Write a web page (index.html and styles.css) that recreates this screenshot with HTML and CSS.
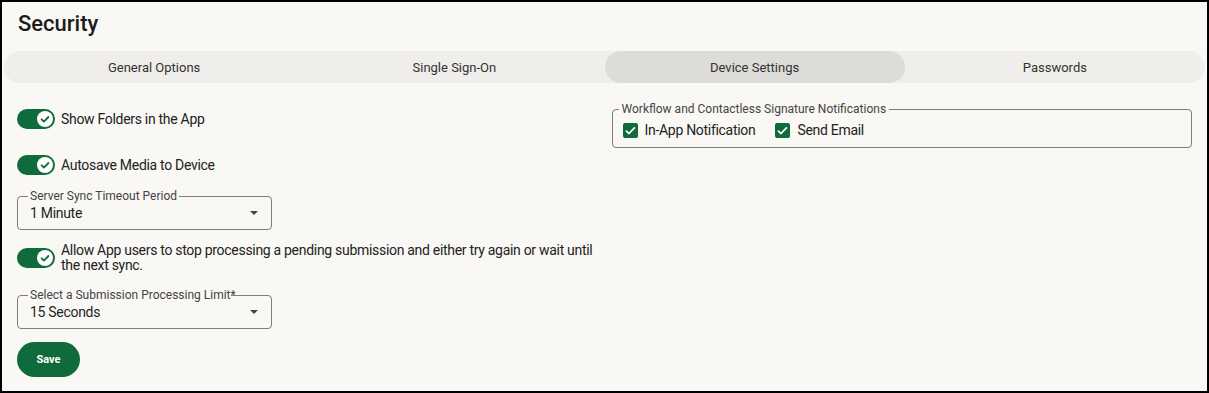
FILE: index.html
```html
<!DOCTYPE html>
<html lang="en">
<head>
<meta charset="utf-8">
<title>Security</title>
<link rel="stylesheet" href="styles.css">
</head>
<body>
<div class="page">
  <h1 class="title">Security</h1>
  <div class="tabs">
    <div class="tab">General Options</div>
    <div class="tab">Single Sign-On</div>
    <div class="tab active">Device Settings</div>
    <div class="tab">Passwords</div>
  </div>
  <div class="content">
    <div class="col-left">
      <div class="switch-row row1">
        <span class="switch"><span class="thumb"><svg viewBox="0 0 16 16" width="16" height="16"><path d="M4.6 8.3l2.3 2.3 4.5-4.6" fill="none" stroke="#0f6b3b" stroke-width="1.8" stroke-linecap="round" stroke-linejoin="round"/></svg></span></span>
        <span class="switch-label">Show Folders in the App</span>
      </div>
      <div class="switch-row row2">
        <span class="switch"><span class="thumb"><svg viewBox="0 0 16 16" width="16" height="16"><path d="M4.6 8.3l2.3 2.3 4.5-4.6" fill="none" stroke="#0f6b3b" stroke-width="1.8" stroke-linecap="round" stroke-linejoin="round"/></svg></span></span>
        <span class="switch-label">Autosave Media to Device</span>
      </div>
      <fieldset class="select sel1">
        <legend>Server Sync Timeout Period</legend>
        <div class="select-value"><span>1 Minute</span><svg class="arrow" viewBox="0 0 8 4" width="8" height="4"><path d="M0 0h8L4 4z" fill="#444"/></svg></div>
      </fieldset>
      <div class="switch-row row3">
        <span class="switch"><span class="thumb"><svg viewBox="0 0 16 16" width="16" height="16"><path d="M4.6 8.3l2.3 2.3 4.5-4.6" fill="none" stroke="#0f6b3b" stroke-width="1.8" stroke-linecap="round" stroke-linejoin="round"/></svg></span></span>
        <span class="switch-label wrap">Allow App users to stop processing a pending submission and either try again or wait until the next sync.</span>
      </div>
      <fieldset class="select sel2">
        <legend>Select a Submission Processing Limit<span class="req">*</span></legend>
        <div class="select-value"><span>15 Seconds</span><svg class="arrow" viewBox="0 0 8 4" width="8" height="4"><path d="M0 0h8L4 4z" fill="#444"/></svg></div>
      </fieldset>
      <button class="save">Save</button>
    </div>
    <div class="col-right">
      <fieldset class="group">
        <legend>Workflow and Contactless Signature Notifications</legend>
        <div class="checks">
          <label class="check"><span class="box"><svg viewBox="0 0 15 15" width="15" height="15"><path d="M3 7.7l2.9 2.8 6-6.1" fill="none" stroke="#fff" stroke-width="1.7"/></svg></span>In-App Notification</label>
          <label class="check"><span class="box"><svg viewBox="0 0 15 15" width="15" height="15"><path d="M3 7.7l2.9 2.8 6-6.1" fill="none" stroke="#fff" stroke-width="1.7"/></svg></span>Send Email</label>
        </div>
      </fieldset>
    </div>
  </div>
</div>
</body>
</html>
```
FILE: styles.css
```css
html, body {
  margin: 0;
  padding: 0;
}
body {
  background: #f9f8f4;
  font-family: Roboto, "Liberation Sans", Arial, sans-serif;
  color: #222;
}
.page {
  box-sizing: border-box;
  height: 393px;
  border: 2px solid #000;
  padding: 8px 2px 0;
}
.title {
  margin: 0 0 0 14px;
  font-size: 22px;
  line-height: 28px;
  font-weight: 500;
  color: #1c1c1c;
}
.tabs {
  margin-top: 13px;
  display: grid;
  grid-template-columns: repeat(4, 1fr);
  height: 32px;
  border-radius: 16px;
  background: #efeeea;
}
.tab {
  display: flex;
  align-items: center;
  justify-content: center;
  font-size: 13px;
  color: #333;
  border-radius: 16px;
}
.tab.active {
  background: #dedcd8;
}
.content {
  display: grid;
  grid-template-columns: 1fr 1fr;
  column-gap: 14px;
  padding: 0 13px;
}
.col-left {
  display: flex;
  flex-direction: column;
  align-items: flex-start;
}
.switch-row {
  display: flex;
  align-items: center;
  gap: 6px;
}
.row1 { margin-top: 26px; }
.row2 { margin-top: 26px; }
.row3 { margin-top: 13px; }
.switch {
  flex: none;
  box-sizing: border-box;
  width: 38px;
  height: 20px;
  border-radius: 10px;
  background: #0f6b3b;
  display: flex;
  align-items: center;
  justify-content: flex-end;
  padding: 0 2px;
}
.thumb {
  width: 16px;
  height: 16px;
  border-radius: 50%;
  background: #fff;
  display: block;
}
.thumb svg { display: block; }
.switch-label {
  font-size: 14px;
  letter-spacing: -0.3px;
  line-height: 20px;
  color: #222;
}
.switch-label.wrap {
  line-height: 15px;
}
.select {
  margin: 0;
  box-sizing: border-box;
  width: 255px;
  border: 1px solid #7b7f79;
  border-radius: 4px;
  padding: 0 12px 7px;
  min-width: 0;
}
.select legend {
  font-size: 12px;
  line-height: 12px;
  white-space: nowrap;
  color: #444;
  padding: 0 2px;
  margin-left: -2px;
}
.req {
  margin-right: -7px;
}
.sel1 { margin-top: 15px; }
.sel2 { margin-top: 16px; }
.select-value {
  margin-top: 2px;
  height: 18px;
  display: flex;
  align-items: center;
  justify-content: space-between;
  font-size: 14px;
  letter-spacing: -0.3px;
  color: #1f1f1f;
}
.arrow {
  display: block;
  margin-right: 1px;
}
.save {
  margin-top: 13px;
  width: 63px;
  height: 35px;
  border: none;
  border-radius: 18px;
  background: #0f6b3b;
  color: #fff;
  font-family: Roboto, "Liberation Sans", Arial, sans-serif;
  font-weight: 700;
  font-size: 11px;
  padding: 0;
}
.col-right {
  padding-top: 20px;
}
.group {
  margin: 0;
  border: 1px solid #7b7f79;
  border-radius: 4px;
  padding: 0 10px 7px;
  min-width: 0;
}
.group legend {
  font-size: 12px;
  line-height: 13px;
  white-space: nowrap;
  color: #444;
  padding: 0 3px;
  margin-left: -4px;
}
.checks {
  margin-top: 4px;
  height: 20px;
  display: flex;
  align-items: center;
  gap: 20px;
}
.check {
  display: flex;
  align-items: center;
  gap: 7px;
  font-size: 14px;
  letter-spacing: -0.3px;
  color: #222;
}
.box {
  width: 15px;
  height: 15px;
  border-radius: 2px;
  background: #0f6b3b;
  display: block;
}
.box svg { display: block; }
```
